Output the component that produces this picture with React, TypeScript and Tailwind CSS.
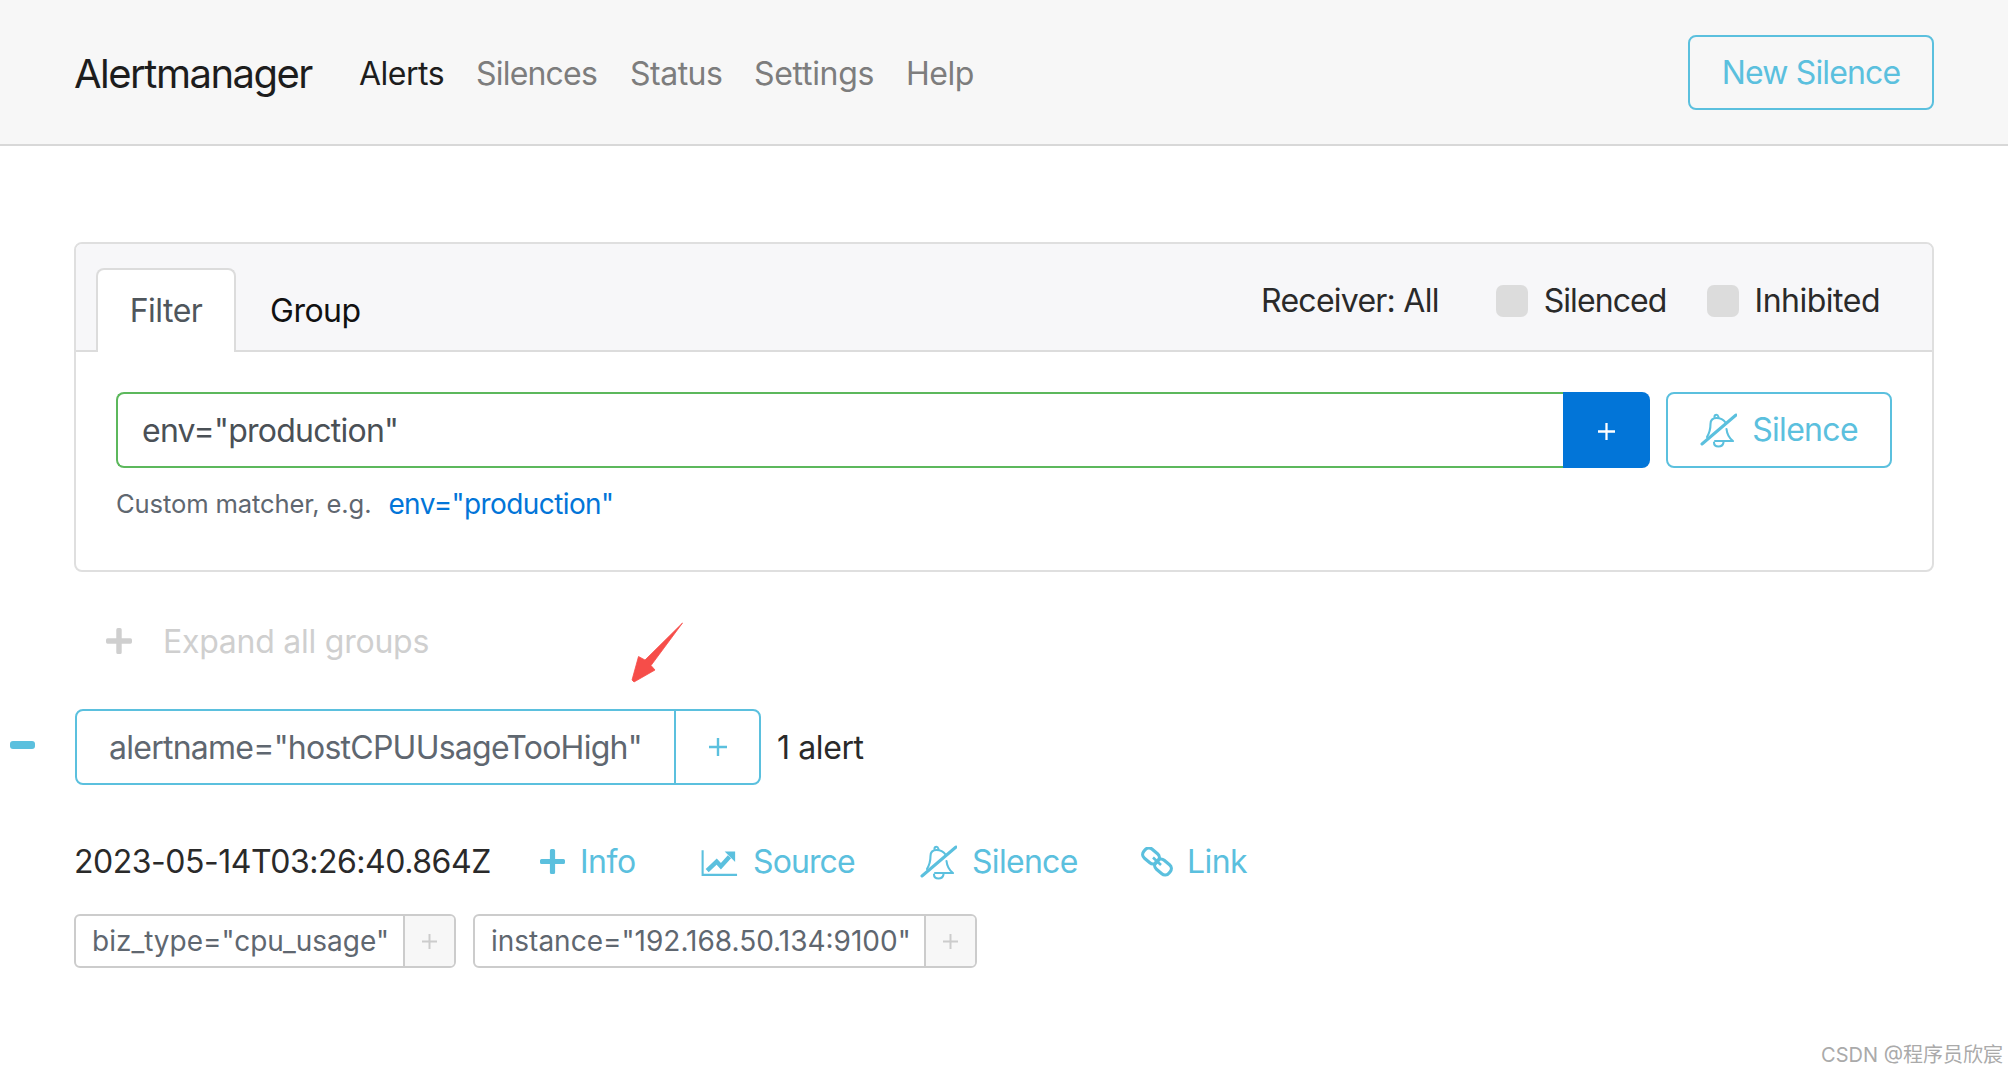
import React from "react";

const BellSlash = ({ className }: { className?: string }) => (
  <svg viewBox="10 4 37 35" className={className} fill="none" stroke="currentColor" strokeWidth="2.1" strokeLinecap="round" strokeLinejoin="round">
    <path d="M12 35 L46 6" strokeWidth="3" />
    <path d="M17 28 C20 23 20.5 18 20.5 15 C20.5 11 23 9 26.5 9 C30 9 33 10 35.5 13.5" />
    <path d="M36.5 20 C37 25 39 29 43 32 L25 32" />
    <path d="M24.5 8 C24.5 6.5 25.5 5.8 26.5 5.8 C27.5 5.8 28 6.5 28.5 8" />
    <path d="M24 33.5 C24 36 26 37.5 28.5 37.5 C31 37.5 33 36 33.5 33.5" />
  </svg>
);

const ChartIcon = ({ className }: { className?: string }) => (
  <svg viewBox="5 7 39 28" className={className} fill="none" stroke="currentColor">
    <path d="M6.7 8 V34 H43" strokeWidth="2.2" />
    <path d="M11.5 29.5 L21.5 20 L26 25 L35 15" strokeWidth="4.6" />
    <path d="M30 9.5 H41 V20.5 Z" fill="currentColor" stroke="none" />
  </svg>
);

const LinkIcon = ({ className }: { className?: string }) => (
  <svg viewBox="0 0 32 30" className={className} fill="none" stroke="currentColor" strokeWidth="3.2">
    <rect x="1.5" y="3" width="17" height="12" rx="5" transform="rotate(40 10 9)" />
    <rect x="13.5" y="14" width="17" height="12" rx="5" transform="rotate(40 22 20)" />
    <path d="M12 10.5 L20 18" strokeWidth="2.6" />
  </svg>
);

const PlusBold = ({ className }: { className?: string }) => (
  <svg viewBox="0 0 24 24" className={className} fill="currentColor">
    <path d="M9.5 1.5 A1.5 1.5 0 0 1 11 0 H13 A1.5 1.5 0 0 1 14.5 1.5 V9.5 H22.5 A1.5 1.5 0 0 1 24 11 V13 A1.5 1.5 0 0 1 22.5 14.5 H14.5 V22.5 A1.5 1.5 0 0 1 13 24 H11 A1.5 1.5 0 0 1 9.5 22.5 V14.5 H1.5 A1.5 1.5 0 0 1 0 13 V11 A1.5 1.5 0 0 1 1.5 9.5 H9.5 Z" />
  </svg>
);

const ThinPlus = ({ className }: { className?: string }) => (
  <svg viewBox="0 0 18 18" className={className} fill="none" stroke="currentColor" strokeWidth="2.4">
    <path d="M9 0 V18 M0 9 H18" />
  </svg>
);

const Arrow = () => (
  <svg viewBox="0 0 75 75" className="absolute left-[620px] top-[615px] w-[75px] h-[75px]">
    <path d="M62.5 8 L25 45 L18.5 41.5 L12 65 L14 67 L35 55 L31 50.5 Z" fill="#f64d49" stroke="#f64d49" strokeWidth="0.8" strokeLinejoin="round" />
  </svg>
);

const Small = ({ text, w }: { text: string; w: string }) => (
  <div className={`flex h-[54px] border-2 border-[#cccccc] rounded-[6px] overflow-hidden ${w}`}>
    <div className="flex-1 flex items-center pl-[16px] text-[28px] text-[#5f6770] whitespace-nowrap border-r-2 border-[#cccccc]">{text}</div>
    <div className="w-[49px] bg-[#f7f7f7] flex items-center justify-center text-[#cccccc]">
      <ThinPlus className="w-[15px] h-[15px]" />
    </div>
  </div>
);

const Action = ({ icon, label, className }: { icon: React.ReactNode; label: string; className: string }) => (
  <div className={`flex items-center text-[#5bc0de] text-[32px] ${className}`}>
    {icon}
    <span>{label}</span>
  </div>
);

export default function App() {
  return (
    <div className="relative w-[2008px] h-[1072px] overflow-hidden bg-white font-['Inter','Noto_Sans_CJK_SC',sans-serif]">
      <header className="h-[146px] bg-[#f7f7f7] border-b-2 border-[#d8d8d8] flex items-center pl-[74px] pr-[74px]">
        <span className="text-[40px] text-[#1d1d1d] w-[286px] tracking-[-1.5px] pt-[3px]">Alertmanager</span>
        <nav className="flex text-[32px] text-[#7d7d7d] flex-1 tracking-[-0.5px] pt-[3px]">
          <span className="text-[#1d1d1d] w-[116px] -ml-[1px] mr-[1px]">Alerts</span>
          <span className="w-[154px] tracking-[-0.8px]">Silences</span>
          <span className="w-[124px]">Status</span>
          <span className="w-[152px] tracking-[-0.3px]">Settings</span>
          <span>Help</span>
        </nav>
        <button className="w-[246px] h-[75px] border-2 border-[#5bc0de] rounded-[8px] text-[#5bc0de] text-[32px] tracking-[-0.85px] pt-[2px]">New Silence</button>
      </header>

      <main className="pl-[74px] pr-[74px]">
        <section className="mt-[96px] h-[330px] border-2 border-[#dfdfdf] rounded-[8px]">
          <div className="h-[108px] bg-[#f7f7f9] border-b-2 border-[#dcdcdc] rounded-t-[6px] flex items-end pl-[20px] pr-[52px] relative">
            <div className="w-[140px] h-[84px] -mb-[2px] bg-white border-2 border-b-0 border-[#dcdcdc] rounded-t-[8px] flex items-center justify-center text-[32px] text-[#4f565c] tracking-[-0.5px]">Filter</div>
            <div className="ml-[34px] h-[82px] flex items-center text-[32px] text-[#111111] pt-[4px] tracking-[-0.5px]">Group</div>
            <div className="ml-auto self-start mt-[40px] flex items-center text-[32px] text-[#2a2a2a] h-[34px]">
              <span className="mr-[57px] tracking-[-0.75px]">Receiver: All</span>
              <span className="w-[32px] h-[32px] rounded-[7px] bg-[#dcdcdc] mr-[16px]" />
              <span className="mr-[40px] tracking-[-0.9px]">Silenced</span>
              <span className="w-[32px] h-[32px] rounded-[7px] bg-[#dcdcdc] mr-[16px]" />
              <span className="tracking-[-0.5px]">Inhibited</span>
            </div>
          </div>
          <div className="pl-[40px] pr-[40px] pt-[40px]">
            <div className="flex h-[76px]">
              <div className="w-[1449px] border-2 border-r-0 border-[#5cb85c] rounded-l-[8px] flex items-center pl-[24px] pt-[1px] text-[32px] text-[#4a5056] tracking-[-0.75px]">env="production"</div>
              <div className="w-[87px] bg-[#0275d8] rounded-r-[8px] flex items-center justify-center text-white pt-[3px]">
                <ThinPlus className="w-[17px] h-[17px]" />
              </div>
              <button className="ml-[16px] w-[226px] border-2 border-[#5bc0de] rounded-[8px] text-[#5bc0de] text-[32px] flex items-center pl-[32px] tracking-[-0.7px]">
                <BellSlash className="w-[37px] h-[35px] mr-[15px]" />
                Silence
              </button>
            </div>
            <div className="flex items-center mt-[16px] h-[40px]">
              <span className="text-[25.6px] text-[#5f6770] mr-[17px] tracking-[-0.13px]">Custom matcher, e.g.</span>
              <span className="text-[28px] text-[#0275d8] tracking-[-0.6px]">env="production"</span>
            </div>
          </div>
        </section>

        <div className="flex items-center mt-[50px] h-[40px] pl-[32px] text-[32px] text-[#cfcfcf] tracking-[-0.25px]">
          <PlusBold className="w-[26px] h-[26px] mr-[31px] -mt-[3px]" />
          Expand all groups
        </div>

        <div className="flex items-center mt-[47px] -ml-[64px]">
          <span className="w-[25px] h-[8px] rounded-[3px] bg-[#5bc0de] mr-[40px] -mt-[4px]" />
          <div className="flex w-[686px] h-[76px] border-2 border-[#5bc0de] rounded-[8px]">
            <div className="w-[599px] border-r-2 border-[#5bc0de] flex items-center pl-[32px] pt-[1px] text-[32px] text-[#5f6770] whitespace-nowrap tracking-[-0.75px]">alertname="hostCPUUsageTooHigh"</div>
            <div className="flex-1 flex items-center justify-center text-[#5bc0de]">
              <ThinPlus className="w-[18px] h-[18px]" />
            </div>
          </div>
          <span className="ml-[16px] pt-[2px] text-[32px] text-[#2a2a2a] tracking-[-0.4px]">1 alert</span>
        </div>

        <div className="flex items-center mt-[57px] h-[40px]">
          <span className="text-[32px] text-[#2a2a2a] w-[466px] tracking-[-0.47px]">2023-05-14T03:26:40.864Z</span>
          <Action className="w-[161px] tracking-[-0.5px]" label="Info" icon={<PlusBold className="w-[25px] h-[25px] mr-[15px] -mt-[2px]" />} />
          <Action className="w-[219px] tracking-[-0.9px]" label="Source" icon={<ChartIcon className="w-[37px] h-[27px] mr-[15px]" />} />
          <Action className="w-[221px] tracking-[-0.7px]" label="Silence" icon={<BellSlash className="w-[37px] h-[35px] mr-[15px]" />} />
          <Action className="tracking-[-0.6px]" label="Link" icon={<LinkIcon className="w-[32px] h-[30px] mr-[14px]" />} />
        </div>

        <div className="flex mt-[32px] gap-[17px]">
          <Small text={'biz_type="cpu_usage"'} w="w-[382px]" />
          <Small text={'instance="192.168.50.134:9100"'} w="w-[504px]" />
        </div>
      </main>

      <Arrow />
      <span className="absolute right-[5px] top-[1040px] text-[20px] text-[#aaaaaa] whitespace-nowrap">CSDN @程序员欣宸</span>
    </div>
  );
}
